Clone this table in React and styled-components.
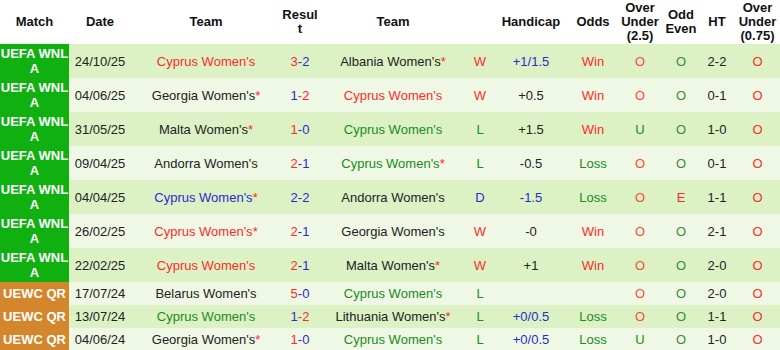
import React from 'react';
import styled, { createGlobalStyle } from 'styled-components';

// COLOURS
const RED = '#ff2a2a';
const BLUE = '#2a2ad0';
const GREEN = '#208a20';
const DARK = '#222';

const GlobalStyle = createGlobalStyle`
  html, body {
    margin: 0;
    padding: 0;
    background: #fff;
    font-family: "Liberation Sans", Arial, sans-serif;
  }
`;

// STYLES
const Table = styled.table`
  width: 780px;
  border-collapse: collapse;
  table-layout: fixed;
  font-size: 13px;
  color: ${DARK};
`;

const HeadCell = styled.th`
  height: 44px;
  padding: 0;
  font-weight: bold;
  font-size: 13px;
  line-height: 14px;
  color: #111;
  text-align: center;
  vertical-align: middle;
`;

const Row = styled.tr`
  background: ${(p) => (p.$alt ? '#eff8e4' : '#dcf2c5')};
  height: ${(p) => (p.$tall ? '34px' : '23px')};
`;

const Cell = styled.td`
  padding: 0;
  text-align: center;
  vertical-align: middle;
  white-space: nowrap;
  color: ${(p) => p.$color || DARK};
`;

const MatchCell = styled.td`
  padding: 0;
  text-align: center;
  vertical-align: middle;
  background: ${(p) => (p.$league === 'UEWC QR' ? '#d4862c' : '#10b010')};
  color: #fff;
  font-weight: bold;
  font-size: 13px;
  line-height: 15px;
`;

const Star = styled.span`
  color: ${RED};
`;

const Score = styled.span`
  color: ${(p) => p.$color};
`;

// DATA
const widths = [69, 62, 150, 38, 148, 26, 76, 48, 46, 36, 36, 45];

const rows = [
  { lg: 'UEFA WNL A', date: '24/10/25', home: 'Cyprus Women\'s', hc: RED, hs: false, away: 'Albania Women\'s', ac: DARK, as: true, score: [3, 2], res: 'W', hcp: '+1/1.5', hcpc: BLUE, odds: 'Win', ou: 'O', oe: 'O', ht: '2-2', ou2: 'O' },
  { lg: 'UEFA WNL A', date: '04/06/25', home: 'Georgia Women\'s', hc: DARK, hs: true, away: 'Cyprus Women\'s', ac: RED, as: false, score: [1, 2], res: 'W', hcp: '+0.5', hcpc: DARK, odds: 'Win', ou: 'O', oe: 'O', ht: '0-1', ou2: 'O' },
  { lg: 'UEFA WNL A', date: '31/05/25', home: 'Malta Women\'s', hc: DARK, hs: true, away: 'Cyprus Women\'s', ac: GREEN, as: false, score: [1, 0], res: 'L', hcp: '+1.5', hcpc: DARK, odds: 'Win', ou: 'U', oe: 'O', ht: '1-0', ou2: 'O' },
  { lg: 'UEFA WNL A', date: '09/04/25', home: 'Andorra Women\'s', hc: DARK, hs: false, away: 'Cyprus Women\'s', ac: GREEN, as: true, score: [2, 1], res: 'L', hcp: '-0.5', hcpc: DARK, odds: 'Loss', ou: 'O', oe: 'O', ht: '0-1', ou2: 'O' },
  { lg: 'UEFA WNL A', date: '04/04/25', home: 'Cyprus Women\'s', hc: BLUE, hs: true, away: 'Andorra Women\'s', ac: DARK, as: false, score: [2, 2], res: 'D', hcp: '-1.5', hcpc: BLUE, odds: 'Loss', ou: 'O', oe: 'E', ht: '1-1', ou2: 'O' },
  { lg: 'UEFA WNL A', date: '26/02/25', home: 'Cyprus Women\'s', hc: RED, hs: true, away: 'Georgia Women\'s', ac: DARK, as: false, score: [2, 1], res: 'W', hcp: '-0', hcpc: DARK, odds: 'Win', ou: 'O', oe: 'O', ht: '2-1', ou2: 'O' },
  { lg: 'UEFA WNL A', date: '22/02/25', home: 'Cyprus Women\'s', hc: RED, hs: false, away: 'Malta Women\'s', ac: DARK, as: true, score: [2, 1], res: 'W', hcp: '+1', hcpc: DARK, odds: 'Win', ou: 'O', oe: 'O', ht: '2-0', ou2: 'O' },
  { lg: 'UEWC QR', date: '17/07/24', home: 'Belarus Women\'s', hc: DARK, hs: false, away: 'Cyprus Women\'s', ac: GREEN, as: false, score: [5, 0], res: 'L', hcp: '', hcpc: DARK, odds: '', ou: 'O', oe: 'O', ht: '2-0', ou2: 'O' },
  { lg: 'UEWC QR', date: '13/07/24', home: 'Cyprus Women\'s', hc: GREEN, hs: false, away: 'Lithuania Women\'s', ac: DARK, as: true, score: [1, 2], res: 'L', hcp: '+0/0.5', hcpc: BLUE, odds: 'Loss', ou: 'O', oe: 'O', ht: '1-1', ou2: 'O' },
  { lg: 'UEWC QR', date: '04/06/24', home: 'Georgia Women\'s', hc: DARK, hs: true, away: 'Cyprus Women\'s', ac: GREEN, as: false, score: [1, 0], res: 'L', hcp: '+0/0.5', hcpc: BLUE, odds: 'Loss', ou: 'U', oe: 'O', ht: '1-0', ou2: 'O' },
];

const resColor = { W: RED, L: GREEN, D: BLUE };
const oddsColor = { Win: RED, Loss: GREEN };
const ouColor = { O: '#ff4a3a', U: GREEN };
const oeColor = { O: '#3a8a3a', E: RED };

function scoreColors([h, a]) {
  if (h > a) return [RED, BLUE];
  if (h < a) return [BLUE, RED];
  return [BLUE, BLUE];
}

// MODULE
export default function App() {
  return (
    <>
      <GlobalStyle />
      <Table>
        <colgroup>
          {widths.map((w, i) => (
            <col key={i} style={{ width: w }} />
          ))}
        </colgroup>
        <thead>
          <tr>
            <HeadCell>Match</HeadCell>
            <HeadCell>Date</HeadCell>
            <HeadCell>Team</HeadCell>
            <HeadCell>Resul<br />t</HeadCell>
            <HeadCell>Team</HeadCell>
            <HeadCell />
            <HeadCell>Handicap</HeadCell>
            <HeadCell>Odds</HeadCell>
            <HeadCell>Over<br />Under<br />(2.5)</HeadCell>
            <HeadCell>Odd<br />Even</HeadCell>
            <HeadCell>HT</HeadCell>
            <HeadCell>Over<br />Under<br />(0.75)</HeadCell>
          </tr>
        </thead>
        <tbody>
          {rows.map((r, i) => {
            const [c1, c2] = scoreColors(r.score);
            const tall = r.lg !== 'UEWC QR';
            return (
              <Row key={i} $alt={i % 2 === 1} $tall={tall}>
                <MatchCell $league={r.lg}>
                  {tall ? (
                    <>UEFA WNL<br />A</>
                  ) : (
                    r.lg
                  )}
                </MatchCell>
                <Cell>{r.date}</Cell>
                <Cell $color={r.hc}>
                  {r.home}
                  {r.hs && <Star>*</Star>}
                </Cell>
                <Cell>
                  <Score $color={c1}>{r.score[0]}</Score>
                  <Score $color={c2}>-{r.score[1]}</Score>
                </Cell>
                <Cell $color={r.ac}>
                  {r.away}
                  {r.as && <Star>*</Star>}
                </Cell>
                <Cell $color={resColor[r.res]}>{r.res}</Cell>
                <Cell $color={r.hcpc}>{r.hcp}</Cell>
                <Cell $color={oddsColor[r.odds]}>{r.odds}</Cell>
                <Cell $color={ouColor[r.ou]}>{r.ou}</Cell>
                <Cell $color={oeColor[r.oe]}>{r.oe}</Cell>
                <Cell>{r.ht}</Cell>
                <Cell $color={RED}>{r.ou2}</Cell>
              </Row>
            );
          })}
        </tbody>
      </Table>
    </>
  );
}
